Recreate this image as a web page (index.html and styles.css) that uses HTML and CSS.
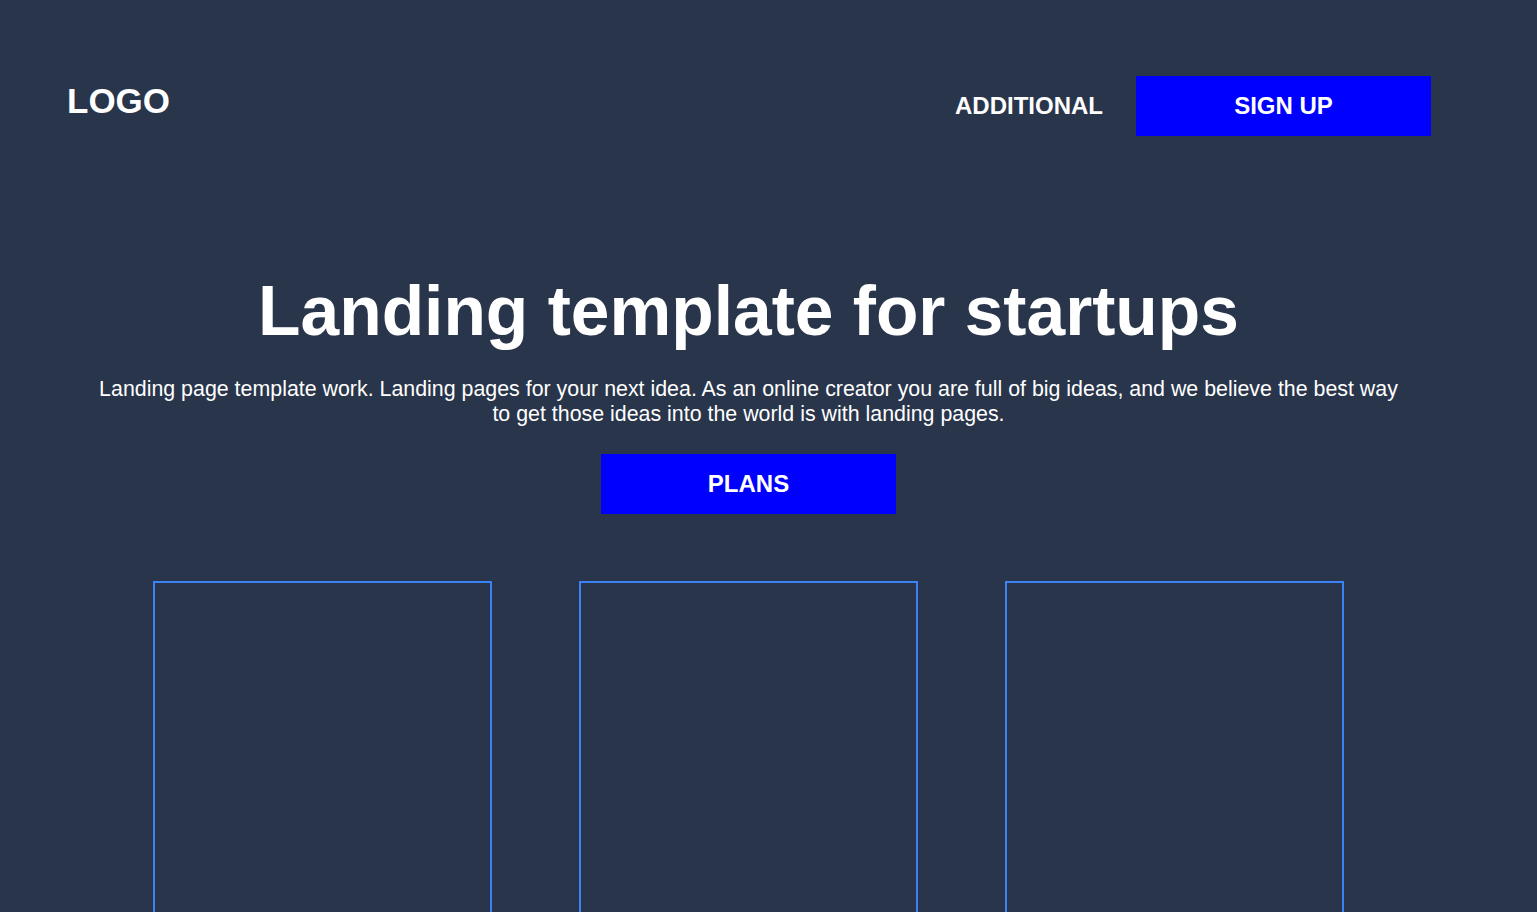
FILE: index.html
```html
<!DOCTYPE html>
<html lang="en">
<head>
<meta charset="utf-8">
<title>Landing template for startups</title>
<link rel="stylesheet" href="styles.css">
</head>
<body>
<div class="page">
  <header class="header">
    <div class="logo">LOGO</div>
    <nav class="nav">
      <a class="nav-link" href="#">ADDITIONAL</a>
      <a class="btn" href="#">SIGN UP</a>
    </nav>
  </header>
  <section class="hero">
    <h1 class="hero-title">Landing template for startups</h1>
    <p class="hero-text">Landing page template work. Landing pages for your next idea. As an online creator you are full of big ideas, and we believe the best way to get those ideas into the world is with landing pages.</p>
    <a class="btn" href="#">PLANS</a>
  </section>
  <section class="cards">
    <div class="card"></div>
    <div class="card"></div>
    <div class="card"></div>
  </section>
</div>
</body>
</html>
```
FILE: styles.css
```css
html, body {
  margin: 0;
  padding: 0;
}
body {
  background: #29354b;
  color: #ffffff;
  font-family: "Liberation Sans", Arial, sans-serif;
  height: 912px;
  overflow: hidden;
}
.page {
  width: 1497px;
}
.header {
  display: flex;
  justify-content: space-between;
  align-items: center;
  padding: 76px 66px 0 67px;
}
.logo {
  font-size: 35px;
  font-weight: 700;
  margin-bottom: 10px;
}
.nav {
  display: flex;
  align-items: center;
  gap: 33px;
}
.nav-link {
  color: #ffffff;
  text-decoration: none;
  font-size: 24px;
  font-weight: 700;
}
.btn {
  display: flex;
  align-items: center;
  justify-content: center;
  width: 295px;
  height: 60px;
  background: #0000ff;
  color: #ffffff;
  text-decoration: none;
  font-size: 24px;
  font-weight: 700;
}
.hero {
  display: flex;
  flex-direction: column;
  align-items: center;
  margin-top: 135px;
}
.hero-title {
  margin: 0;
  font-size: 69.5px;
  font-weight: 700;
  line-height: 80px;
}
.hero-text {
  width: 1320px;
  margin: 26px 0 27px;
  font-size: 21.38px;
  line-height: 25px;
  text-align: center;
}
.cards {
  display: flex;
  justify-content: center;
  gap: 87px;
  margin-top: 67px;
}
.card {
  width: 335px;
  height: 400px;
  border: 2px solid #3b82f6;
}
```
